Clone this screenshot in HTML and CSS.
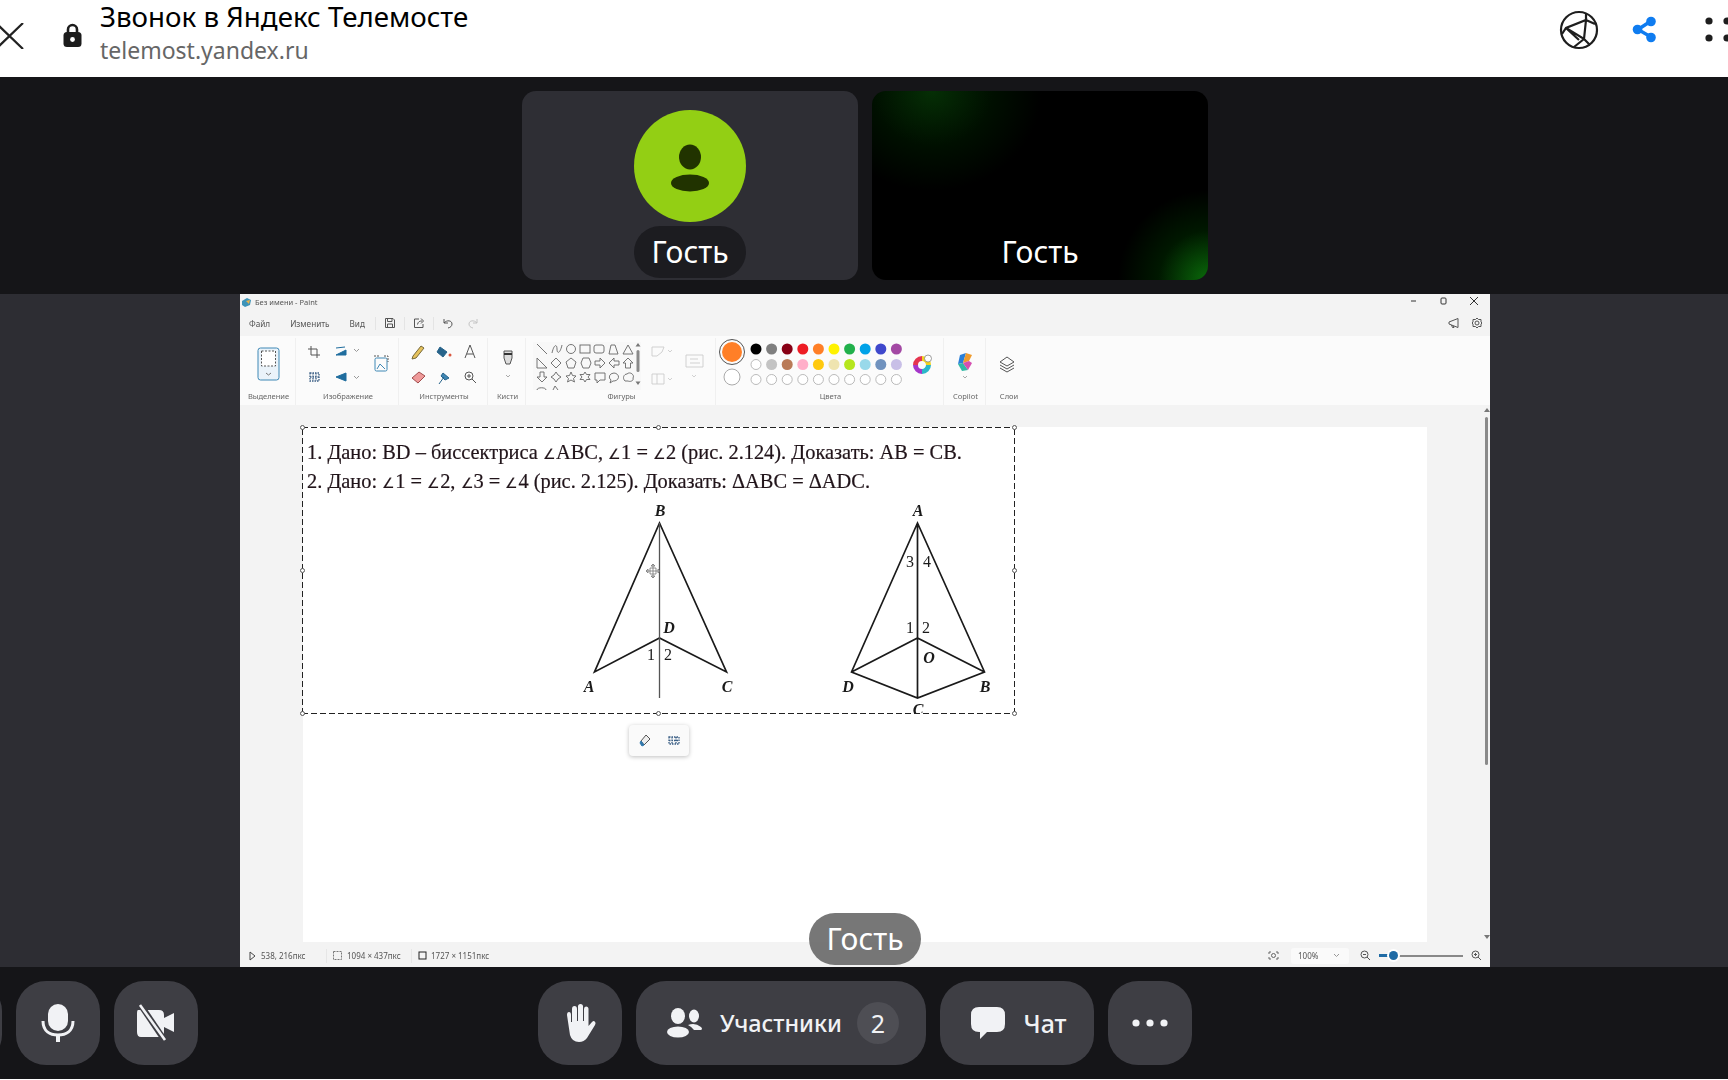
FILE: index.html
```html
<!DOCTYPE html>
<html lang="ru">
<head>
  <meta charset="UTF-8" />
  <title>Звонок в Яндекс Телемосте</title>
  <link rel="stylesheet" href="styles.css">
</head>
<body>
  <!-- browser header -->
  <header class="topbar">
    <svg class="close-icon" width="24" height="26" viewBox="0 0 24 26"><path d="M-4 0 L23 26 M23 0 L-4 26" stroke="#222" stroke-width="2.2" fill="none"/></svg>
    <svg class="lock-icon" width="19" height="24" viewBox="0 0 19 24"><path d="M5 10 V6.5 a4.5 4.5 0 0 1 9 0 V10" fill="none" stroke="#1c1c1c" stroke-width="2.6"/><rect x="0.5" y="9" width="18" height="15" rx="3.5" fill="#1c1c1c"/><circle cx="9.5" cy="16.5" r="2.4" fill="#fff"/></svg>
    <div class="page-title">
      <div class="page-name">Звонок в Яндекс Телемосте</div>
      <div class="page-url">telemost.yandex.ru</div>
    </div>
    <div class="top-actions">
      <svg width="40" height="40" viewBox="0 0 40 40" fill="none" stroke="#1e1e1e" stroke-width="2.2"><circle cx="20" cy="20" r="18"/><path d="M3 24 L7 18 L27 10 L25 29 L7 18 M27 10 L27 3 M25 29 L31 35 M25 29 L15 37 M7 18 L20 30 M27 10 L36 14"/></svg>
      <svg class="share-icon" width="26" height="28" viewBox="0 0 26 28"><path d="M20 5 L7 13.5 L20 21" stroke="#0f7cf0" stroke-width="3.4" fill="none"/><circle cx="20" cy="5.5" r="4.8" fill="#0f7cf0"/><circle cx="6.5" cy="13.5" r="4.8" fill="#0f7cf0"/><circle cx="20" cy="21.5" r="4.8" fill="#0f7cf0"/></svg>
      <svg class="dots-icon" width="28" height="26" viewBox="0 0 28 26" fill="#1e1e1e"><circle cx="4" cy="4" r="3.6"/><circle cx="22" cy="4" r="3.6"/><circle cx="4" cy="21" r="3.6"/><circle cx="22" cy="21" r="3.6"/></svg>
    </div>
  </header>

  <!-- participants -->
  <section class="tiles">
    <div class="tile tile-avatar">
      <div class="avatar">
        <svg width="44" height="48" viewBox="0 0 44 48" fill="#213300"><ellipse cx="22" cy="13" rx="11" ry="12.5"/><ellipse cx="22" cy="39" rx="19" ry="8.5"/></svg>
      </div>
      <div class="tile-name tile-name-pill">Гость</div>
    </div>
    <div class="tile tile-video">
      <div class="tile-name">Гость</div>
    </div>
  </section>

  <!-- shared screen -->
  <main class="share">
    <div class="paint">
      <div class="paint-title">
        <svg width="11" height="11" viewBox="0 0 11 11"><path d="M1 4 L6 1 L10 3 L9 8 L4 10 L1 8 Z" fill="#3d93b8"/><path d="M5 4 L9 3 L8 7 Z" fill="#e8b24a"/></svg>
        <span>Без имени - Paint</span>
        <div class="win-buttons">
          <svg width="70" height="12" viewBox="0 0 70 12" fill="none" stroke="#333"><path d="M2 6 H7"/><rect x="32" y="3" width="5" height="6" rx="1"/><path d="M61 2 L69 10 M69 2 L61 10"/></svg>
        </div>
      </div>

      <div class="paint-menu">
        <span class="menu-item">Файл</span>
        <span class="menu-item">Изменить</span>
        <span class="menu-item">Вид</span>
        <i class="menu-sep"></i>
        <svg width="12" height="12" viewBox="0 0 12 12" fill="none" stroke="#555"><path d="M1.5 1.5 H9 L10.500 3 V10.500 H1.500 Z M3.500 1.500 V4.500 H8 V1.500 M3.500 10.500 V7 H8.500 V10.500"/></svg>
        <i class="menu-sep"></i>
        <svg width="12" height="12" viewBox="0 0 12 12" fill="none" stroke="#555"><path d="M6 2 H1.500 V10.500 H10 V7 M4.500 7.500 C5 4.500 7 4 9 4 M8 1.500 L10.500 4 L8 6.500"/></svg>
        <i class="menu-sep"></i>
        <svg width="12" height="12" viewBox="0 0 12 12" fill="none" stroke="#555"><path d="M2 2 V6 H6 M2 6 C5 2.500 10 3.500 10 7 C10 9 8.500 10.500 6 11"/></svg>
        <svg class="redo-icon" width="12" height="12" viewBox="0 0 12 12" fill="none" stroke="#c4c4c4"><path d="M10 2 V6 H6 M10 6 C7 2.500 2 3.500 2 7 C2 9 3.500 10.500 6 11"/></svg>
        <div class="menu-right">
          <svg width="12" height="12" viewBox="0 0 12 12" fill="none" stroke="#555"><path d="M1 5 L10 1.500 V10.500 L1 7 Z M3.500 8 L4.500 10.500 H6 L5.500 9"/></svg>
          <svg width="12" height="12" viewBox="0 0 12 12" fill="none" stroke="#555"><circle cx="6" cy="6" r="2"/><path d="M6 1 L7.500 2.500 L10 2.500 L10 5 L11 6 L10 7 L10 9.500 L7.500 9.500 L6 11 L4.500 9.500 L2 9.500 L2 7 L1 6 L2 5 L2 2.500 L4.500 2.500 Z"/></svg>
        </div>
      </div>

      <div class="ribbon">
        <div class="group group-select">
          <svg width="56" height="52" viewBox="240 338 56 52">
            <rect x="258" y="348" width="21" height="32" rx="2.500" fill="#eaf3fa" stroke="#3f88b5"/>
            <rect x="261.500" y="351" width="14" height="15" fill="#fff" stroke="#555" stroke-dasharray="2 1.500"/>
            <path d="M266 373 L268.500 375 L271 373" fill="none" stroke="#777"/>
          </svg>
          <div class="group-label">Выделение</div>
        </div>
        <div class="group group-image">
          <svg width="103" height="52" viewBox="296 338 103 52" fill="none" stroke="#555">
            <path d="M311 346 V355 H320 M308 349 H317 V358"/>
            <path d="M336 348 L345 347 M336 355 L346 350 V355 Z" stroke="#1f6d9e" fill="#1f6d9e"/>
            <path d="M354 349 L356.500 351.500 L359 349 M354 376 L356.500 378.500 L359 376" stroke="#999"/>
            <path d="M310 373 H319 V381 H310 Z M313 373 V381 M316 373 V381 M310 377 H319" stroke="#3b5f85" stroke-width="1.300" stroke-dasharray="1.500 1"/>
            <path d="M336 377 L346 373 V381 Z" stroke="#1f6d9e" fill="#1f6d9e"/>
            <rect x="375" y="358" width="12" height="13" rx="1.500" stroke="#3f88b5"/>
            <path d="M374 356 H380 M384 356 H388 V362" stroke="#555" stroke-dasharray="2 1"/>
            <path d="M377 369 L380 364 L385 369" stroke="#3f88b5"/>
          </svg>
          <div class="group-label">Изображение</div>
        </div>
        <div class="group group-tools">
          <svg width="89" height="52" viewBox="399 338 89 52" fill="none" stroke="#555">
            <path d="M413 356 L421 346 L424 348 L416 358 L412 359 Z" fill="#e6c25c" stroke="#77693a"/>
            <path d="M440 347 L447 352 L443 357 L437 352 Z" fill="#27638a" stroke="#27638a"/><circle cx="450" cy="355" r="1.500" fill="#d9573f" stroke="none"/>
            <path d="M465 358 L470 345 L475 358 M467 354 H473"/>
            <path d="M412 378 L419 372 L425 376 L418 383 Z" fill="#ef9a9a" stroke="#a14d4d"/>
            <path d="M439 384 L444 377 M443 373 L449 378 L445 380 L441 376 Z" fill="#3e86b4" stroke="#27638a"/>
            <circle cx="469" cy="376" r="4"/><path d="M472 379 L476 383 M467 376 H471 M469 374 V378"/>
          </svg>
          <div class="group-label">Инструменты</div>
        </div>
        <div class="group group-brush">
          <svg width="38" height="52" viewBox="488 338 38 52" fill="none" stroke="#555">
            <path d="M504 351 H512 V358 L510 364 H506 L504 358 Z" fill="#ddd"/>
            <path d="M504 354 H512" stroke="#333" stroke-width="2"/>
            <path d="M506 375 L508 377 L510 375" stroke="#aaa"/>
          </svg>
          <div class="group-label">Кисти</div>
        </div>
        <div class="group group-shapes">
          <svg width="190" height="52" viewBox="526 338 190 52" fill="none" stroke="#666" stroke-width="0.900">
            <rect x="533" y="342" width="108" height="48" fill="#f8f8f8" stroke="none"/>
            <path d="M537 344 L547 354"/>
            <path d="M552 353 C554 344 557 344 557 349 C557 354 560 354 562 345"/>
            <circle cx="571" cy="349" r="4.500"/>
            <rect x="580" y="345" width="10" height="8"/>
            <rect x="594" y="345" width="10" height="8" rx="2"/>
            <path d="M609 354 L611 345 H615 L618 354 Z"/>
            <path d="M628 345 L633 354 H623 Z"/>
            <path d="M537 358 V368 H547 Z"/>
            <path d="M556 358 L561 363 L556 368 L551 363 Z"/>
            <path d="M571 358 L576 362 L574 368 H568 L566 362 Z"/>
            <path d="M583 358 H589 L591 363 L589 368 H583 L581 363 Z"/>
            <path d="M595 361 H600 V358 L605 363 L600 368 V365 H595 Z"/>
            <path d="M619 361 H614 V358 L609 363 L614 368 V365 H619 Z"/>
            <path d="M628 358 L633 363 H630.500 V368 H625.500 V363 H623 Z"/>
            <path d="M540 372 V377 H537 L542 382 L547 377 H544 V372 Z"/>
            <path d="M556 372 L558 375 L561 377 L558 379 L556 382 L554 379 L551 377 L554 375 Z"/>
            <path d="M571 372 L572.500 375.500 L576 376 L573.500 378.500 L574.500 382 L571 380 L567.500 382 L568.500 378.500 L566 376 L569.500 375.500 Z"/>
            <path d="M585 372 L586.500 374.500 L590 374.500 L588 377 L590 379.500 L586.500 379.500 L585 382 L583.500 379.500 L580 379.500 L582 377 L580 374.500 L583.500 374.500 Z"/>
            <path d="M595 373 H605 V380 H600 L597 383 V380 H595 Z"/>
            <path d="M614 373 a5 4 0 1 1 -1 8 L610 383 L611 380 a5 4 0 0 1 3 -7 Z"/>
            <path d="M625 381 C622 378 624 374 627 374 C630 371 635 375 633 378 C634 381 630 382 628 381 Z"/>
            <path d="M537 390 C537 387 546 387 546 390 M553 390 L555 386 L558 390"/>
            <rect x="636.500" y="350" width="3" height="22" rx="1.500" fill="#8a8a8a" stroke="none"/>
            <path d="M638 343 L640.500 346.500 H635.500 Z M638 385 L640.500 381.500 H635.500 Z" fill="#777" stroke="none"/>
            <path d="M652 347 H664 L662 352 L657 356 H652 Z M652 374 H664 V384 H652 Z M657 374 V384" stroke="#ccc"/>
            <path d="M668 350 L670 352 L672 350 M668 378 L670 380 L672 378" stroke="#ccc"/>
            <path d="M686 355 H703 V367 H686 Z M690 359 H698 M690 363 H700" stroke="#ccc"/>
            <path d="M692 375 L694 377 L696 375" stroke="#ccc"/>
          </svg>
          <div class="group-label">Фигуры</div>
        </div>
        <div class="group group-colors">
          <svg width="228" height="52" viewBox="716 338 228 52">
            <circle cx="732" cy="352" r="10" fill="#ff7f27"/>
            <circle cx="732" cy="352" r="12.500" fill="none" stroke="#555"/>
            <circle cx="732" cy="377" r="8" fill="#fff" stroke="#aaa"/>
            <g stroke="none">
              <circle cx="756" cy="349" r="5.500" fill="#000"/><circle cx="771.600" cy="349" r="5.500" fill="#7f7f7f"/><circle cx="787.200" cy="349" r="5.500" fill="#880015"/><circle cx="802.800" cy="349" r="5.500" fill="#ed1c24"/><circle cx="818.400" cy="349" r="5.500" fill="#ff7f27"/><circle cx="834" cy="349" r="5.500" fill="#fff200"/><circle cx="849.600" cy="349" r="5.500" fill="#22b14c"/><circle cx="865.200" cy="349" r="5.500" fill="#00a2e8"/><circle cx="880.800" cy="349" r="5.500" fill="#3f48cc"/><circle cx="896.400" cy="349" r="5.500" fill="#a349a4"/>
              <circle cx="771.600" cy="364.500" r="5.500" fill="#c3c3c3"/><circle cx="787.200" cy="364.500" r="5.500" fill="#b97a57"/><circle cx="802.800" cy="364.500" r="5.500" fill="#ffaec9"/><circle cx="818.400" cy="364.500" r="5.500" fill="#ffc90e"/><circle cx="834" cy="364.500" r="5.500" fill="#efe4b0"/><circle cx="849.600" cy="364.500" r="5.500" fill="#b5e61d"/><circle cx="865.200" cy="364.500" r="5.500" fill="#99d9ea"/><circle cx="880.800" cy="364.500" r="5.500" fill="#7092be"/><circle cx="896.400" cy="364.500" r="5.500" fill="#c8bfe7"/>
            </g>
            <circle cx="756" cy="364.500" r="5" fill="#fff" stroke="#aaa" stroke-width="0.800"/>
            <g fill="#fff" stroke="#aaa" stroke-width="0.800">
              <circle cx="756" cy="379.500" r="5"/><circle cx="771.600" cy="379.500" r="5"/><circle cx="787.200" cy="379.500" r="5"/><circle cx="802.800" cy="379.500" r="5"/><circle cx="818.400" cy="379.500" r="5"/><circle cx="834" cy="379.500" r="5"/><circle cx="849.600" cy="379.500" r="5"/><circle cx="865.200" cy="379.500" r="5"/><circle cx="880.800" cy="379.500" r="5"/><circle cx="896.400" cy="379.500" r="5"/>
            </g>
            <g fill="none" stroke-width="5">
              <path d="M922 358.500 A6.500 6.500 0 0 1 928.500 365" stroke="#f2d21f"/>
              <path d="M928.500 365 A6.500 6.500 0 0 1 922 371.500" stroke="#2bb7c9"/>
              <path d="M922 371.500 A6.500 6.500 0 0 1 915.500 365" stroke="#a536c9"/>
              <path d="M915.500 365 A6.500 6.500 0 0 1 922 358.500" stroke="#e5344f"/>
            </g>
            <circle cx="928" cy="358.500" r="3.500" fill="#fff" stroke="#777" stroke-width="0.700"/>
          </svg>
          <div class="group-label">Цвета</div>
        </div>
        <div class="group group-copilot">
          <svg width="42" height="52" viewBox="944 338 42 52" fill="none">
            <path d="M960 355 L966 353 L963 363 L958 364 Z" fill="#2a7fd8"/>
            <path d="M966 353 L972 355 L969 361 L963 363 Z" fill="#ef9b2d"/>
            <path d="M958 364 L963 363 L968 370 L962 371 Z" fill="#31b9a5"/>
            <path d="M969 361 L972 363 L968 370 L963 363 Z" fill="#d54fb0"/>
            <path d="M963 376 L965 378 L967 376" stroke="#aaa"/>
          </svg>
          <div class="group-label">Copilot</div>
        </div>
        <div class="group group-layers">
          <svg width="44" height="52" viewBox="986 338 44 52" fill="none" stroke="#555">
            <path d="M1007 357 L1014 362 L1007 366 L1000 362 Z M1000 365 L1007 369 L1014 365 M1000 368 L1007 372 L1014 368"/>
          </svg>
          <div class="group-label">Слои</div>
        </div>
      </div>

      <div class="workspace">
        <div class="canvas">
          <div class="selection">
            <p class="task">1. Дано: BD – биссектриса <span class="angle">∠</span>ABC, <span class="angle">∠</span>1 = <span class="angle">∠</span>2 (рис. 2.124). Доказать: AB = CB.</p>
            <p class="task">2. Дано: <span class="angle">∠</span>1 = <span class="angle">∠</span>2, <span class="angle">∠</span>3 = <span class="angle">∠</span>4 (рис. 2.125). Доказать: ΔABC = ΔADC.</p>
            <svg class="figures" width="713" height="216" viewBox="302 497 713 216" fill="none" stroke="#1a1a1a" stroke-width="1.700">
              <path d="M659.500 523 L594.500 672 L659.500 638 L726.500 672 Z"/>
              <path d="M659.500 523 V698" stroke="#555" stroke-width="1.300"/>
              <path d="M917.500 523 L851.500 672 L917.500 698 L984.500 672 Z M851.500 672 L917.500 638 L984.500 672 M917.500 523 V698"/>
              <g class="fig-label" fill="#1a1a1a" stroke="none">
                <text x="660" y="516" class="fig-letter">B</text>
                <text x="669" y="633" class="fig-letter">D</text>
                <text x="651" y="660">1</text>
                <text x="668" y="660">2</text>
                <text x="589" y="692" class="fig-letter">A</text>
                <text x="727" y="692" class="fig-letter">C</text>
                <text x="918" y="516" class="fig-letter">A</text>
                <text x="910" y="567">3</text>
                <text x="927" y="567">4</text>
                <text x="910" y="633">1</text>
                <text x="926" y="633">2</text>
                <text x="929" y="663" class="fig-letter">O</text>
                <text x="848" y="692" class="fig-letter">D</text>
                <text x="985" y="692" class="fig-letter">B</text>
                <text x="918" y="715" class="fig-letter">C</text>
              </g>
              <path d="M653 564 V578 M646 571 H660 M653 564 L651 566 H655 Z M653 578 L651 576 H655 Z M646 571 L648 569 V573 Z M660 571 L658 569 V573 Z M650 568 H656 V574 H650 Z" stroke="#777" stroke-width="0.800"/>
            </svg>
            <i class="handle h-tl"></i><i class="handle h-tc"></i><i class="handle h-tr"></i>
            <i class="handle h-ml"></i><i class="handle h-mr"></i>
            <i class="handle h-bl"></i><i class="handle h-bc"></i><i class="handle h-br"></i>
          </div>
          <div class="float-tools">
            <svg width="12" height="13" viewBox="0 0 12 13" fill="none" stroke="#555"><path d="M2 7 L7 1 L11 5 L5 11 Z" fill="#eee"/><path d="M2 7 L5 11 L3 12 L1 9 Z" fill="#2f78ad" stroke="#2f78ad"/></svg>
            <svg width="12" height="12" viewBox="0 0 12 12" fill="none" stroke="#3b5f85" stroke-width="1.300"><path d="M1 2 H11 V9 H1 Z M4 2 V9 M8 2 V9 M1 5.500 H11" stroke-dasharray="1.500 1"/></svg>
          </div>
        </div>
        <div class="vscroll">
          <i class="scroll-up"></i>
          <i class="scroll-thumb"></i>
          <i class="scroll-down"></i>
        </div>
      </div>

      <div class="statusbar">
        <div class="status-item status-pos">
          <svg width="7" height="10" viewBox="0 0 7 10" fill="none" stroke="#444"><path d="M1 1 V9 L6 5 Z"/></svg>
          <span>538, 216пкс</span>
        </div>
        <div class="status-item status-sel">
          <svg width="9" height="9" viewBox="0 0 9 9" fill="none" stroke="#777" stroke-dasharray="2 1"><rect x="0.500" y="0.500" width="8" height="8"/></svg>
          <span>1094 × 437пкс</span>
        </div>
        <div class="status-item status-size">
          <svg width="9" height="9" viewBox="0 0 9 9" fill="none" stroke="#222"><rect x="1" y="1" width="7" height="7"/></svg>
          <span>1727 × 1151пкс</span>
        </div>
        <div class="status-zoom">
          <svg width="11" height="9" viewBox="0 0 11 9" fill="none" stroke="#666"><path d="M1 3 V1 H3 M8 1 H10 V3 M10 6 V8 H8 M3 8 H1 V6"/><circle cx="5.500" cy="4.500" r="2"/></svg>
          <div class="zoom-select"><span>100%</span><svg width="7" height="5" viewBox="0 0 7 5" fill="none" stroke="#999"><path d="M1 1 L3.500 3.500 L6 1"/></svg></div>
          <svg class="zoom-out" width="11" height="11" viewBox="0 0 11 11" fill="none" stroke="#555"><circle cx="4.500" cy="4.500" r="3.500"/><path d="M7 7 L10 10 M3 4.500 H6"/></svg>
          <div class="zoom-slider"><i class="zoom-fill"></i><i class="zoom-thumb"></i></div>
          <svg width="11" height="11" viewBox="0 0 11 11" fill="none" stroke="#555"><circle cx="4.500" cy="4.500" r="3.500"/><path d="M7 7 L10 10 M3 4.500 H6 M4.500 3 V6"/></svg>
        </div>
      </div>
    </div>
    <div class="speaker">Гость</div>
  </main>

  <!-- call controls -->
  <footer class="controls">
    <div class="ctl ctl-cut"></div>
    <div class="ctl ctl-round">
      <svg width="34" height="38" viewBox="0 0 34 38"><rect x="7" y="0" width="20" height="27" rx="10" fill="#f1f2f5"/><path d="M2 17 C2 27 9 31 17 31 C25 31 32 27 32 17" fill="none" stroke="#f1f2f5" stroke-width="3"/><rect x="15" y="30" width="4" height="8" fill="#f1f2f5"/></svg>
    </div>
    <div class="ctl ctl-round">
      <svg width="42" height="38" viewBox="0 0 42 38"><path d="M3 6 H24 Q29 6 29 11 V14 L39 9 V28 L29 23 V28 Q29 33 24 33 H6 Q2 33 2 28 V9 Q2 6 3 6 Z" fill="#f1f2f5"/><path d="M5 0 L30 37" stroke="#3e3e44" stroke-width="6"/><path d="M5 1 L30 36" stroke="#f1f2f5" stroke-width="2.600"/></svg>
    </div>
    <div class="ctl-center">
      <div class="ctl ctl-round ctl-hand">
        <svg width="32" height="38" viewBox="0 0 32 38" fill="#f1f2f5"><path d="M3 11 Q3 8 5 8 Q7 8 7 11 V18 H8 V5 Q8 2 10.500 2 Q13 2 13 5 V17 H14 V2.500 Q14 0 16.500 0 Q19 0 19 2.500 V17 H20 V5 Q20 2.500 22 2.500 Q24.500 2.500 24.500 5 V22 L28 18 Q30 16 31 18 Q32 19 31 21 L23 34 Q20 38 15 38 Q8 38 6 31 Z"/></svg>
      </div>
      <div class="ctl ctl-people">
        <svg width="36" height="30" viewBox="0 0 36 30" fill="#f1f2f5"><ellipse cx="11" cy="8" rx="7" ry="8"/><ellipse cx="11" cy="24" rx="11" ry="5.500"/><ellipse cx="27" cy="8" rx="5" ry="6.500"/><path d="M21 17 Q28 14 34 19 Q36 21 34 22 H27 Q25 19 21 17 Z"/></svg>
        <span class="ctl-text">Участники</span>
        <span class="count">2</span>
      </div>
      <div class="ctl ctl-chat">
        <svg width="34" height="32" viewBox="0 0 34 32" fill="#f1f2f5"><path d="M8 0 H26 Q34 0 34 8 V17 Q34 25 26 25 H16 L9 32 V25 H8 Q0 25 0 17 V8 Q0 0 8 0 Z"/></svg>
        <span class="ctl-text">Чат</span>
      </div>
      <div class="ctl ctl-more">
        <svg width="36" height="8" viewBox="0 0 36 8" fill="#f1f2f5"><circle cx="4" cy="4" r="3.600"/><circle cx="18" cy="4" r="3.600"/><circle cx="32" cy="4" r="3.600"/></svg>
      </div>
    </div>
  </footer>
</body>
</html>
```

FILE: styles.css
```css
* {
  box-sizing: border-box;
}
html, body {
  margin: 0;
  padding: 0;
  height: 1080px;
  overflow: hidden;
}
body {
  background-color: #ffffff;
  font-family: "Noto Sans", "Open Sans", sans-serif;
  color: #000;
}

/* header */
.topbar {
  height: 77px;
  display: flex;
  align-items: center;
  background-color: #fff;
}
.close-icon {
  margin-bottom: 6px;
}
.lock-icon {
  margin-left: 39px;
  margin-bottom: 7px;
}
.page-title {
  margin-left: 18px;
  margin-top: -4px;
}
.page-name {
  font-size: 27.700px;
  line-height: 32px;
  margin-top: -8px;
}
.page-url {
  font-size: 23px;
  line-height: 30px;
  color: #666;
  margin-top: 3px;
}
.top-actions {
  margin-left: auto;
  display: flex;
  align-items: center;
  margin-bottom: 17px;
  margin-right: -5px;
}
.share-icon {
  margin-left: 32px;
}
.dots-icon {
  margin-left: 48px;
}

/* participants */
.tiles {
  height: 217px;
  background-color: #151518;
  display: flex;
  justify-content: center;
  gap: 14px;
  padding-top: 14px;
  padding-left: 2px;
}
.tile {
  width: 336px;
  height: 189px;
  border-radius: 14px;
  position: relative;
  display: flex;
  flex-direction: column;
  align-items: center;
}
.tile-avatar {
  background-color: #2e2e34;
  padding-top: 19px;
}
.tile-video {
  background:
    radial-gradient(ellipse 110px 100px at 60px 0, #052f05 0, rgba(0, 30, 0, 0.5) 55%, transparent 100%),
    radial-gradient(ellipse 90px 90px at 100% 100%, #0a6a0a 0, rgba(0, 60, 0, 0.4) 55%, transparent 100%),
    #000;
}
.avatar {
  width: 112px;
  height: 112px;
  border-radius: 50%;
  background-color: #93cf14;
  display: flex;
  align-items: center;
  justify-content: center;
}
.avatar svg {
  margin-top: 3px;
}
.tile-name {
  position: absolute;
  bottom: 2px;
  left: 50%;
  transform: translateX(-50%);
  width: 112px;
  height: 52px;
  border-radius: 26px;
  color: #fff;
  font-size: 30px;
  line-height: 52px;
  text-align: center;
}
.tile-name-pill {
  background-color: #1c1c20;
}

/* shared screen */
.share {
  height: 673px;
  background-color: #2d2d33;
  display: flex;
  justify-content: center;
  position: relative;
  padding-left: 2px;
}
.paint {
  width: 1250px;
  height: 673px;
  background-color: #f3f3f3;
  display: flex;
  flex-direction: column;
  font-size: 8px;
  color: #555;
  filter: blur(0.4px);
}
.paint-title {
  height: 16px;
  display: flex;
  align-items: center;
  gap: 3px;
  padding-left: 1px;
  font-size: 7.500px;
}
.win-buttons {
  margin-left: auto;
  padding-right: 11px;
}
.paint-menu {
  height: 26px;
  display: flex;
  align-items: center;
  padding-left: 9px;
}
.menu-item {
  font-size: 8.200px;
  margin-right: 20px;
}
.menu-sep {
  width: 1px;
  height: 13px;
  background-color: #e4e4e4;
  margin: 0 8px;
}
.menu-item + .menu-sep {
  margin-left: -10px;
}
.redo-icon {
  margin-left: 13px;
}
.menu-right {
  margin-left: auto;
  display: flex;
  gap: 11px;
  padding-right: 7px;
}
.ribbon {
  height: 69px;
  background-color: #fbfbfb;
  display: flex;
  padding-top: 2px;
}
.group {
  display: flex;
  flex-direction: column;
  align-items: center;
  border-right: 1px solid #f0f0f0;
}
.group svg {
  display: block;
}
.group-label {
  font-size: 7.500px;
  line-height: 13px;
  color: #666;
  margin-left: 2px;
}
.group-select { width: 56px; }
.group-image { width: 103px; }
.group-tools { width: 89px; }
.group-brush { width: 38px; }
.group-shapes { width: 190px; }
.group-colors { width: 228px; }
.group-copilot { width: 42px; }
.group-layers { width: 44px; border-right: none; }

.workspace {
  flex: 1;
  display: flex;
  padding-top: 22px;
  padding-left: 63px;
  position: relative;
  min-height: 0;
}
.canvas {
  width: 1124px;
  background-color: #fff;
  position: relative;
}
.selection {
  width: 713px;
  height: 287px;
  margin-left: -1px;
  background:
    repeating-linear-gradient(90deg, #222 0 6px, transparent 6px 9px) top / 100% 1px no-repeat,
    repeating-linear-gradient(90deg, #222 0 6px, transparent 6px 9px) bottom / 100% 1px no-repeat,
    repeating-linear-gradient(0deg, #222 0 6px, transparent 6px 9px) left / 1px 100% no-repeat,
    repeating-linear-gradient(0deg, #222 0 6px, transparent 6px 9px) right / 1px 100% no-repeat;
  position: relative;
  padding-top: 11px;
  padding-left: 1px;
}
.task {
  margin: 0;
  font-family: "Liberation Serif", serif;
  font-size: 20.400px;
  line-height: 29px;
  color: #21141a;
  -webkit-text-stroke: 0.2px #21141a;
  padding-left: 4px;
  white-space: nowrap;
}
.task + .task {
  margin-top: -2px;
}
.angle {
  font-size: 14px;
}
.figures {
  position: absolute;
  left: 0;
  top: 70px;
  display: block;
}
.fig-label text {
  font-family: "Liberation Serif", serif;
  font-size: 16px;
  text-anchor: middle;
}
.fig-label .fig-letter {
  font-style: italic;
  font-weight: bold;
}
.handle {
  position: absolute;
  width: 5px;
  height: 5px;
  border-radius: 50%;
  background-color: #fff;
  border: 1px solid #555;
}
.h-tl { left: -2px; top: -2px; }
.h-tc { left: 354px; top: -2px; }
.h-tr { right: -2px; top: -2px; }
.h-ml { left: -2px; top: 141px; }
.h-mr { right: -2px; top: 141px; }
.h-bl { left: -2px; bottom: -2px; }
.h-bc { left: 354px; bottom: -2px; }
.h-br { right: -2px; bottom: -2px; }
.float-tools {
  position: absolute;
  left: 326px;
  top: 298px;
  width: 60px;
  height: 31px;
  background-color: #fafafa;
  border-radius: 4px;
  box-shadow: 0 1px 4px rgba(0, 0, 0, 0.25);
  display: flex;
  align-items: center;
  justify-content: center;
  gap: 17px;
}
.vscroll {
  position: absolute;
  right: 0;
  top: 0;
  bottom: 0;
  width: 7px;
}
.scroll-up, .scroll-down {
  position: absolute;
  left: 1px;
  width: 0;
  height: 0;
  border-left: 3px solid transparent;
  border-right: 3px solid transparent;
}
.scroll-up {
  top: 3px;
  border-bottom: 4px solid #777;
}
.scroll-down {
  bottom: 3px;
  border-top: 4px solid #777;
}
.scroll-thumb {
  position: absolute;
  left: 2px;
  top: 12px;
  width: 3px;
  height: 348px;
  border-radius: 2px;
  background-color: #8a8a8a;
}
.statusbar {
  height: 25px;
  display: flex;
  align-items: center;
  background-color: #f3f3f3;
  padding-left: 9px;
  padding-top: 2px;
}
.status-item {
  display: flex;
  align-items: center;
  gap: 4px;
  white-space: nowrap;
  border-right: 1px solid #e6e6e6;
  height: 14px;
}
.status-pos { width: 78px; gap: 5px; }
.status-sel { width: 85px; padding-left: 6px; gap: 5px; }
.status-size { border-right: none; padding-left: 6px; }
.status-zoom {
  margin-left: auto;
  display: flex;
  align-items: center;
  padding-right: 8px;
}
.zoom-select {
  width: 58px;
  height: 16px;
  margin-left: 12px;
  margin-right: 11px;
  background-color: #fafafa;
  border-radius: 3px;
  display: flex;
  align-items: center;
  justify-content: space-between;
  padding: 0 9px 0 7px;
}
.zoom-out {
  margin-right: 8px;
}
.zoom-slider {
  width: 84px;
  height: 2px;
  background-color: #888;
  position: relative;
  margin-right: 8px;
}
.zoom-fill {
  position: absolute;
  left: 0;
  top: -1px;
  width: 10px;
  height: 3px;
  background-color: #1f6ba5;
}
.zoom-thumb {
  position: absolute;
  left: 10px;
  top: -4px;
  width: 9px;
  height: 9px;
  border-radius: 50%;
  background-color: #1f6ba5;
  box-shadow: 0 0 0 2px #fff;
}
.speaker {
  position: absolute;
  left: 809px;
  top: 619px;
  width: 112px;
  height: 52px;
  border-radius: 26px;
  background-color: rgba(100, 100, 100, 0.88);
  color: #fff;
  font-size: 30px;
  line-height: 52px;
  text-align: center;
}

/* call controls */
.controls {
  height: 112px;
  background-color: #151518;
  display: flex;
  gap: 14px;
  padding-top: 14px;
  color: #f1f2f5;
  overflow: hidden;
}
.ctl {
  height: 84px;
  background-color: #3e3e44;
  border-radius: 30px;
  display: flex;
  align-items: center;
  justify-content: center;
  flex-shrink: 0;
}
.ctl-cut {
  width: 84px;
  margin-left: -82px;
}
.ctl-round {
  width: 84px;
}
.ctl-center {
  display: flex;
  margin-left: 326px;
  gap: 14px;
}
.ctl-people {
  width: 290px;
  justify-content: flex-start;
  padding-left: 31px;
}
.ctl-text {
  font-size: 25px;
  font-weight: 500;
}
.ctl-people .ctl-text {
  font-size: 23.400px;
  margin-left: 17px;
}
.count {
  width: 42px;
  height: 42px;
  border-radius: 50%;
  background-color: #4e4e54;
  margin-left: 15px;
  font-size: 25px;
  line-height: 42px;
  text-align: center;
}
.ctl-chat {
  width: 154px;
  gap: 18px;
  padding-left: 4px;
}
.ctl-more {
  width: 84px;
}
```
